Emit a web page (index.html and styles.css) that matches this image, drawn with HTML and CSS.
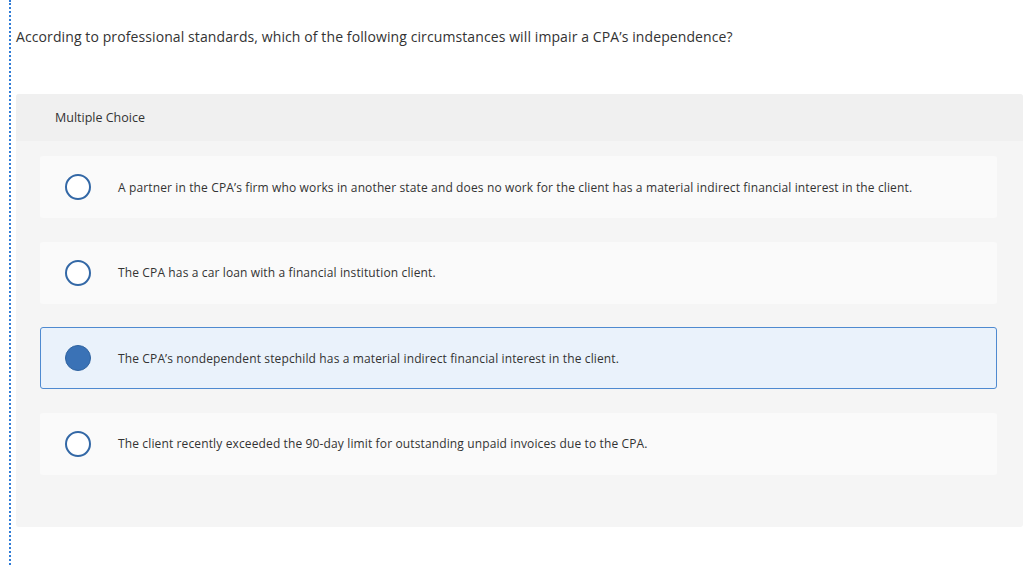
FILE: index.html
```html
<!DOCTYPE html>
<html>
<head>
<meta charset="utf-8">
<link rel="stylesheet" href="styles.css">
</head>
<body>
<div class="frame">
  <p class="question">According to professional standards, which of the following circumstances will impair a CPA’s independence?</p>
  <div class="panel">
    <div class="panel-head">Multiple Choice</div>
    <div class="options">
      <div class="option"><span class="radio"></span><span class="label">A partner in the CPA’s firm who works in another state and does no work for the client has a material indirect financial interest in the client.</span></div>
      <div class="option"><span class="radio"></span><span class="label">The CPA has a car loan with a financial institution client.</span></div>
      <div class="option selected"><span class="radio"></span><span class="label">The CPA’s nondependent stepchild has a material indirect financial interest in the client.</span></div>
      <div class="option"><span class="radio"></span><span class="label">The client recently exceeded the 90-day limit for outstanding unpaid invoices due to the CPA.</span></div>
    </div>
  </div>
</div>
</body>
</html>
```
FILE: styles.css
```css
html, body {
  margin: 0;
  padding: 0;
  background: #ffffff;
}
body {
  font-family: "Open Sans", Lato, "Liberation Sans", sans-serif;
  color: #333333;
  height: 565px;
  overflow: hidden;
}
.frame {
  margin-left: 9px;
  border-left: 2px dotted #2f7bd6;
  padding-left: 5px;
  padding-right: 1px;
  height: 565px;
  box-sizing: border-box;
  padding-top: 28px;
}
.question {
  margin: 0;
  font-size: 14px;
  letter-spacing: 0.1px;
  line-height: 18px;
  color: #333;
}
.panel {
  margin-top: 48px;
  background: #f5f5f5;
  border-radius: 3px;
  overflow: hidden;
}
.panel-head {
  background: #f0f0f0;
  height: 47px;
  display: flex;
  align-items: center;
  padding-left: 39px;
  font-size: 12.5px;
  color: #333;
}
.options {
  padding: 15px 26px 52px 24px;
  display: flex;
  flex-direction: column;
  gap: 23.5px;
}
.option {
  height: 62px;
  box-sizing: border-box;
  background: #fafafa;
  border-radius: 3px;
  display: flex;
  align-items: center;
  padding-left: 24px;
  border: 1px solid transparent;
}
.option.selected {
  background: #eaf2fb;
  border-color: #4f8ad0;
}
.radio {
  width: 26px;
  height: 26px;
  box-sizing: border-box;
  border: 2px solid #3368a6;
  border-radius: 50%;
  background: #fff;
  flex: none;
}
.option.selected .radio {
  background: #3a72b6;
  border-color: #2f63a0;
  border-width: 1px;
}
.label {
  margin-left: 27px;
  font-size: 12px;
  letter-spacing: 0.13px;
  color: #333;
}
```
